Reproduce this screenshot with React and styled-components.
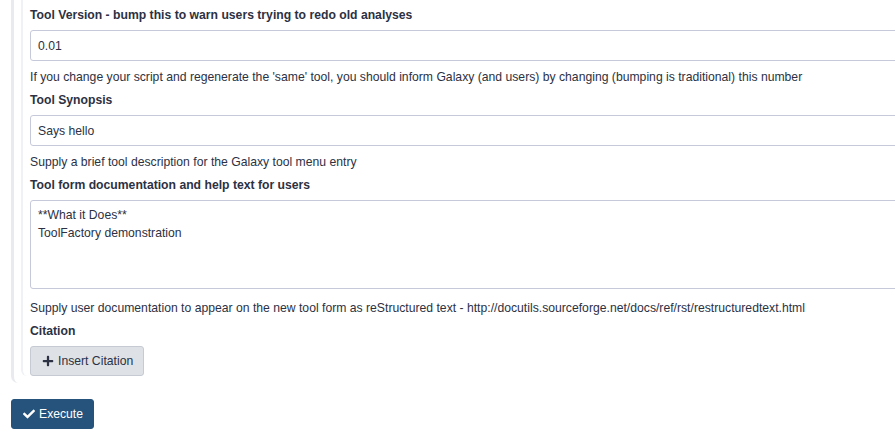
import React from 'react';
import styled, { createGlobalStyle } from 'styled-components';
import { FaCheck, FaPlus } from 'react-icons/fa';

const GlobalStyle = createGlobalStyle`
  body {
    margin: 0;
    background: #fff;
    font-family: "Liberation Sans", Arial, sans-serif;
    font-size: 12.2px;
    color: #2c3143;
    overflow: hidden;
  }
`;

const Page = styled.div`
  padding-left: 11px;
`;

const Portlet = styled.div`
  border-left: 3px solid #e8eaee;
  border-bottom-left-radius: 7px;
  padding: 0 0 7px 7px;
`;

const Section = styled.div`
  border-left: 2px solid #eff1f4;
  border-bottom-left-radius: 6px;
  padding: 6px 0 0 7px;
`;

const Field = styled.div`
  margin-bottom: 5px;
`;

const Label = styled.div`
  font-weight: bold;
  line-height: 18px;
  margin-bottom: 6px;
`;

const TextInput = styled.input`
  display: block;
  box-sizing: border-box;
  width: 900px;
  height: 31px;
  padding: 0 7px;
  border: 1px solid #c6c9da;
  border-radius: 3px;
  font: inherit;
  color: #2c3143;
  background: #fff;
  outline: none;
`;

const TextArea = styled.textarea`
  display: block;
  box-sizing: border-box;
  width: 900px;
  height: 89px;
  padding: 5px 7px;
  border: 1px solid #c6c9da;
  border-radius: 3px;
  font: inherit;
  line-height: 18px;
  color: #2c3143;
  resize: none;
  outline: none;
`;

const Help = styled.div`
  line-height: 18px;
  margin-top: ${(p) => p.$gap || 7}px;
  white-space: nowrap;
`;

const Button = styled.button`
  display: inline-flex;
  align-items: center;
  gap: 4px;
  height: 30px;
  padding: 0 10px 0 11px;
  border-radius: 3px;
  font-family: inherit;
  font-size: 12.2px;
  cursor: pointer;
  background: ${(p) => (p.$primary ? '#25537b' : '#dee2e6')};
  border: 1px solid ${(p) => (p.$primary ? '#25537b' : '#c5cad3')};
  color: ${(p) => (p.$primary ? '#fff' : '#2c3143')};

  svg {
    width: 12px;
    height: 12px;
  }
`;

const Footer = styled.div`
  margin-top: 16px;
`;

const fields = [
  {
    label: 'Tool Version - bump this to warn users trying to redo old analyses',
    value: '0.01',
    help: "If you change your script and regenerate the 'same' tool, you should inform Galaxy (and users) by changing (bumping is traditional) this number",
  },
  {
    label: 'Tool Synopsis',
    value: 'Says hello',
    help: 'Supply a brief tool description for the Galaxy tool menu entry',
  },
];

export default function App() {
  return (
    <Page>
      <GlobalStyle />
      <Portlet>
        <Section>
          {fields.map((f) => (
            <Field key={f.label}>
              <Label>{f.label}</Label>
              <TextInput defaultValue={f.value} />
              <Help>{f.help}</Help>
            </Field>
          ))}
          <Field>
            <Label>Tool form documentation and help text for users</Label>
            <TextArea defaultValue={'**What it Does**\nToolFactory demonstration'} />
            <Help $gap={10}>
              Supply user documentation to appear on the new tool form as reStructured text - http://docutils.sourceforge.net/docs/ref/rst/restructuredtext.html
            </Help>
          </Field>
          <Label>Citation</Label>
          <Button>
            <FaPlus />
            Insert Citation
          </Button>
        </Section>
      </Portlet>
      <Footer>
        <Button $primary>
          <FaCheck />
          Execute
        </Button>
      </Footer>
    </Page>
  );
}
